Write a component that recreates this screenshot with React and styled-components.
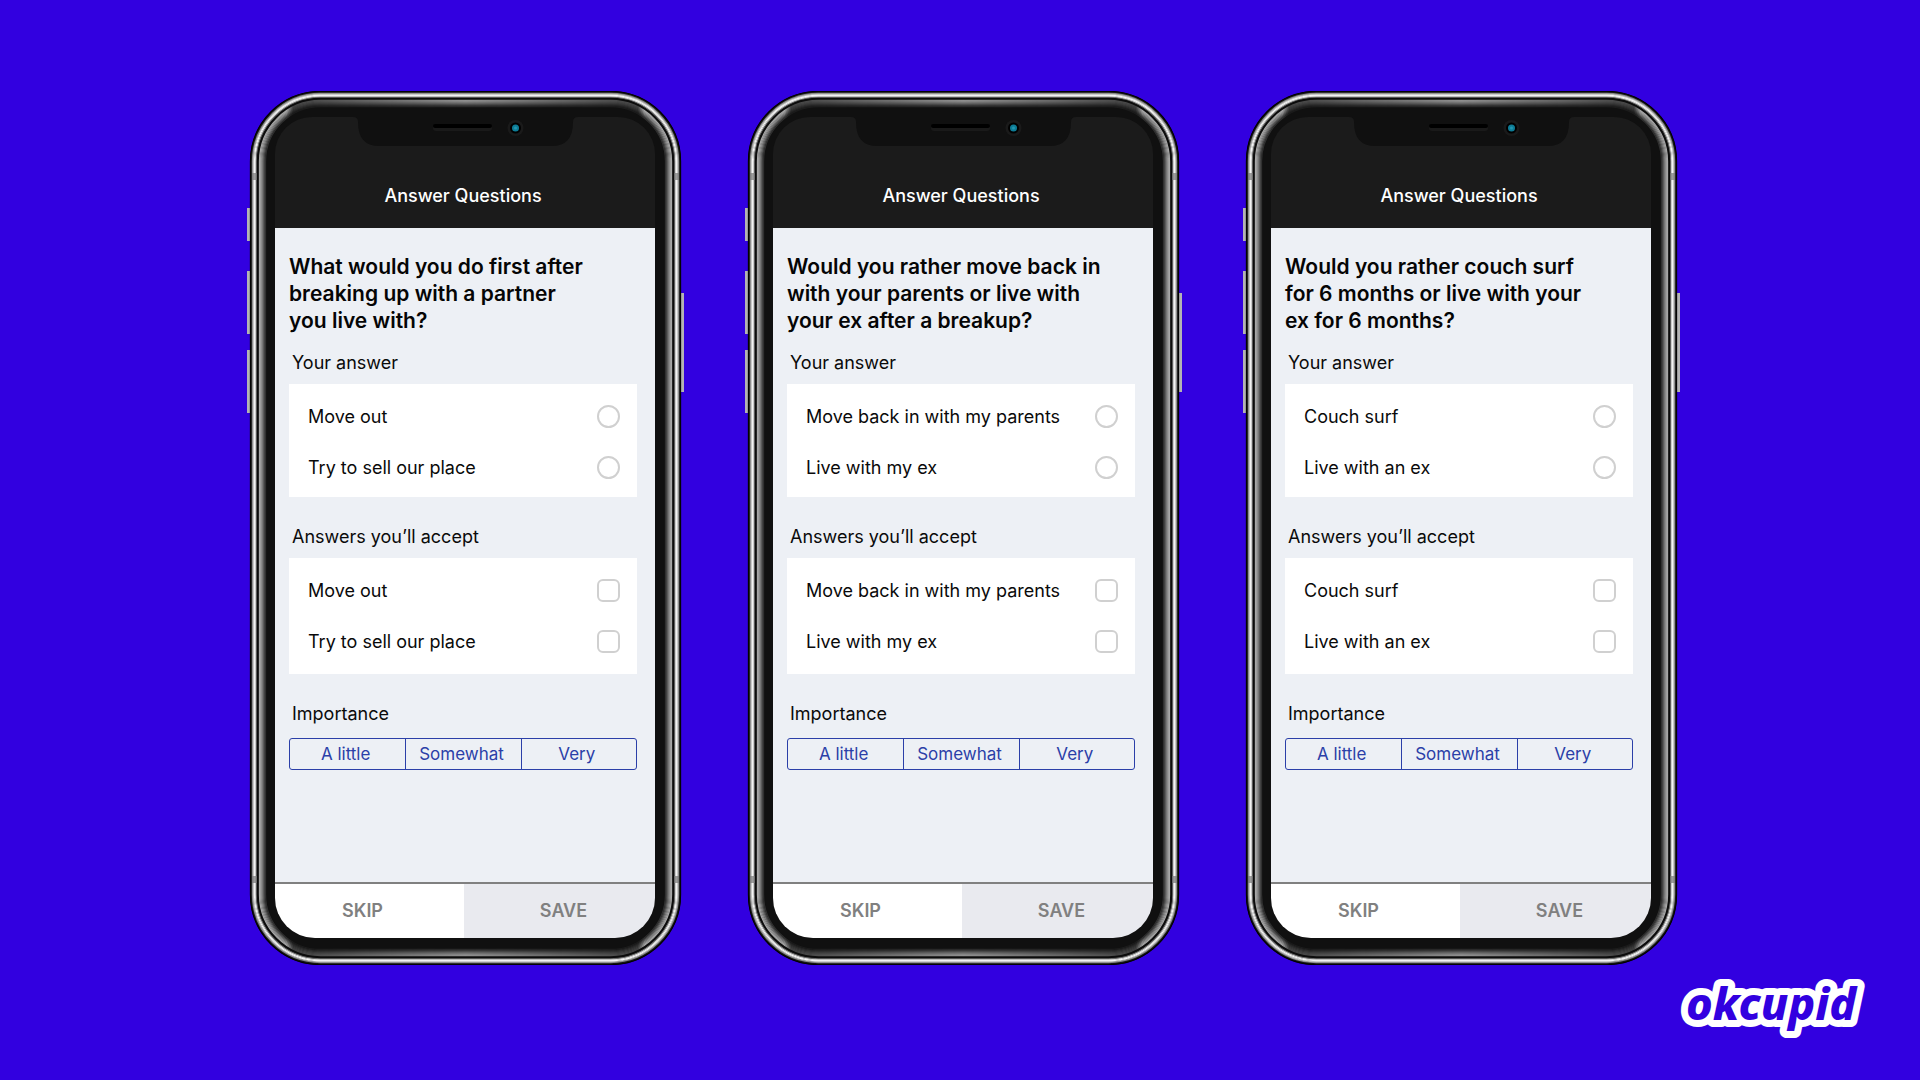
import React, { useId } from "react";
import styled, { createGlobalStyle } from "styled-components";

const GlobalStyle = createGlobalStyle`
  *, *::before, *::after { box-sizing: border-box; }
  body {
    margin: 0;
    background: #3200e0;
    color: #0a0a0a;
    font-family: Inter, "Liberation Sans", sans-serif;
  }
  h1, h2, p { margin: 0; }
  button, input { margin: 0; font: inherit; }
`;

const Page = styled.main`
  display: flex;
  flex-direction: column;
  min-height: 100vh;
  padding-top: 91px;
`;

const Phones = styled.div`
  display: flex;
  flex-wrap: wrap;
  justify-content: center;
  gap: 67px;
  padding-left: 7px;
`;

const Phone = styled.article`
  position: relative;
  display: flex;
  width: 431px;
  min-height: 874px;
  padding: 26px 26px 27px 25px;
`;

const Shell = styled.svg`
  position: absolute;
  top: 0;
  left: -4px;
  width: 439px;
  height: 874px;
`;

const Notch = styled.svg`
  position: absolute;
  top: 25px;
  left: 103px;
  width: 225px;
  height: 32px;
`;

const Screen = styled.div`
  position: relative;
  flex: 1;
  display: flex;
  flex-direction: column;
  overflow: hidden;
  border-radius: 37px 37px 40px 40px;
  background: #1b1b1b;
`;

const TopBar = styled.header`
  padding: 68px 4px 21px 0;
  color: #fff;
  text-align: center;
  font-size: 18px;
  font-weight: 500;
  line-height: 22px;
`;

const Content = styled.div`
  flex: 1;
  padding: 25px 18px 0 14px;
  background: #edf0f5;
`;

const Question = styled.h1`
  color: #050505;
  font-size: 21px;
  font-weight: 600;
  line-height: 27px;
  white-space: pre-line;
`;

const Section = styled.section`
  margin-top: ${(p) => (p.$first ? 18 : 29)}px;
`;

const SectionTitle = styled.h2`
  margin-bottom: 10px;
  padding-left: 3px;
  font-size: 18px;
  font-weight: 400;
  line-height: 22px;
`;

const Card = styled.div`
  padding: 7px 17px ${(p) => (p.$compact ? 4 : 7)}px 19px;
  background: #fff;
`;

const Option = styled.label`
  display: flex;
  align-items: center;
  justify-content: space-between;
  height: 51px;
  font-size: 18px;
  line-height: 22px;
`;

const Choice = styled.input`
  appearance: none;
  width: 23px;
  height: 23px;
  border: 2px solid #d0d0d0;
  border-radius: ${(p) => (p.type === "radio" ? "50%" : "6px")};
  background: #fff;
  &:checked { background: #2b3fa8; }
`;

const Segments = styled.div`
  display: grid;
  grid-template-columns: repeat(3, 1fr);
  margin-top: 13px;
  border: 1px solid #2b3fa8;
  border-radius: 3px;
`;

const Segment = styled.button`
  height: 30px;
  padding: 0 4px 0 0;
  border: 0;
  background: none;
  color: #2b3fa8;
  font-size: 17px;
  line-height: 22px;
  & + & { border-left: 1px solid #2b3fa8; }
`;

const Actions = styled.footer`
  display: grid;
  grid-template-columns: 189fr 191fr;
  border-top: 2px solid #808080;
`;

const Action = styled.button`
  height: 54px;
  padding: ${(p) => (p.$primary ? "0 0 0 8px" : "0 14px 0 0")};
  border: 0;
  background: ${(p) => (p.$primary ? "#e9eaef" : "#fff")};
  color: #808080;
  font-size: 18px;
  font-weight: 600;
  line-height: 22px;
`;

const Brand = styled.footer`
  display: flex;
  justify-content: flex-end;
  margin-top: auto;
  padding: 0 48px 38px;
`;

const Logo = styled.svg`
  width: 200px;
  height: 72px;
`;

const Wordmark = styled.text`
  font: italic 800 45px "Noto Sans", sans-serif;
  fill: #3200e0;
  stroke: #fff;
  stroke-width: 14px;
  stroke-linejoin: round;
  paint-order: stroke;
`;

/* Thin concentric outlines of the metal band, from the outside in. */
const metal = ["#000", "#161616", "#858585", "#c0c0c0", "#f8f8f8", "#dcdcdc", "#6a6a6a", "#0c0c0c"];
/* Reflection along the inner bezel, from the outside in. */
const sheen = ["#a8a8a8", "#a0a0a0", "#8e8e8e", "#7a7a7a", "#606060", "#464646", "#303030"];

function Ring({ inset, color }) {
  return (
    <rect
      x={4.5 + inset}
      y={0.5 + inset}
      width={430 - inset * 2}
      height={873 - inset * 2}
      rx={70 - inset}
      fill="none"
      stroke={color}
      strokeWidth="1.3"
    />
  );
}

function PhoneShell() {
  const id = useId();
  return (
    <Shell viewBox="0 0 439 874" aria-hidden="true">
      <defs>
        <linearGradient id={id + "g"} gradientUnits="userSpaceOnUse" x1="4" x2="435" y1="0" y2="0">
          <stop offset="0" stopColor="#fff" />
          <stop offset="0.085" stopColor="#fff" />
          <stop offset="0.1" stopColor="#555" />
          <stop offset="0.25" stopColor="#888" />
          <stop offset="0.5" stopColor="#d8d8d8" />
          <stop offset="0.75" stopColor="#888" />
          <stop offset="0.9" stopColor="#555" />
          <stop offset="0.915" stopColor="#fff" />
          <stop offset="1" stopColor="#fff" />
        </linearGradient>
        <mask id={id + "m"} maskUnits="userSpaceOnUse" x="0" y="0" width="439" height="874">
          <rect width="439" height="874" fill={`url(#${id}g)`} />
        </mask>
      </defs>
      <g fill="#b4b4b4">
        <rect x="1" y="117" width="4" height="33" />
        <rect x="1" y="180" width="4" height="63" />
        <rect x="1" y="259" width="4" height="63" />
        <rect x="434" y="202" width="4" height="99" />
      </g>
      <rect x="4" width="431" height="874" rx="70" fill="#101010" />
      {metal.map((color, i) => (
        <Ring key={i} inset={i} color={color} />
      ))}
      <g mask={`url(#${id}m)`}>
        {sheen.map((color, i) => (
          <Ring key={i} inset={i + 9} color={color} />
        ))}
      </g>
      <g fill="#777" opacity="0.7">
        <rect x="6" y="82" width="5" height="7" />
        <rect x="428" y="82" width="5" height="7" />
        <rect x="6" y="785" width="5" height="7" />
        <rect x="428" y="785" width="5" height="7" />
      </g>
    </Shell>
  );
}

function PhoneNotch() {
  return (
    <Notch viewBox="0 0 225 32" aria-hidden="true">
      <path d="M0 0 V1 Q5 1 5 6 Q5 30 26 30 H199 Q220 30 220 6 Q220 1 225 1 V0 Z" fill="#101010" />
      <rect x="80" y="8" width="59" height="7" rx="3" fill="#1a1a1a" />
      <rect x="80" y="8" width="59" height="4" rx="2" fill="#000" />
      <circle cx="162.500" cy="12" r="8" fill="#1a1a1a" />
      <circle cx="162.500" cy="12" r="5.500" fill="#000" />
      <circle cx="162.500" cy="12" r="3.500" fill="#0d7c96" />
      <circle cx="162.500" cy="12" r="1.500" fill="#2397b0" />
    </Notch>
  );
}

function OptionGroup({ title, type, options, first }) {
  const id = useId();
  return (
    <Section $first={first} role="group" aria-labelledby={id}>
      <SectionTitle id={id}>{title}</SectionTitle>
      <Card $compact={first}>
        {options.map((option) => (
          <Option key={option}>
            {option}
            <Choice type={type} name={id + "choice"} />
          </Option>
        ))}
      </Card>
    </Section>
  );
}

function QuestionPhone({ question, options }) {
  return (
    <Phone>
      <PhoneShell />
      <Screen>
        <TopBar>Answer Questions</TopBar>
        <Content>
          <Question>{question}</Question>
          <OptionGroup first title="Your answer" type="radio" options={options} />
          <OptionGroup title="Answers you’ll accept" type="checkbox" options={options} />
          <Section>
            <SectionTitle>Importance</SectionTitle>
            <Segments>
              <Segment>A little</Segment>
              <Segment>Somewhat</Segment>
              <Segment>Very</Segment>
            </Segments>
          </Section>
        </Content>
        <Actions>
          <Action>SKIP</Action>
          <Action $primary>SAVE</Action>
        </Actions>
      </Screen>
      <PhoneNotch />
    </Phone>
  );
}

const questions = [
  {
    question: "What would you do first after\nbreaking up with a partner\nyou live with?",
    options: ["Move out", "Try to sell our place"],
  },
  {
    question: "Would you rather move back in\nwith your parents or live with\nyour ex after a breakup?",
    options: ["Move back in with my parents", "Live with my ex"],
  },
  {
    question: "Would you rather couch surf\nfor 6 months or live with your\nex for 6 months?",
    options: ["Couch surf", "Live with an ex"],
  },
];

export default function App() {
  return (
    <Page>
      <GlobalStyle />
      <Phones>
        {questions.map((item) => (
          <QuestionPhone key={item.question} {...item} />
        ))}
      </Phones>
      <Brand>
        <Logo viewBox="0 0 200 72" role="img" aria-label="okcupid">
          <Wordmark x="14" y="50">okcupid</Wordmark>
        </Logo>
      </Brand>
    </Page>
  );
}
